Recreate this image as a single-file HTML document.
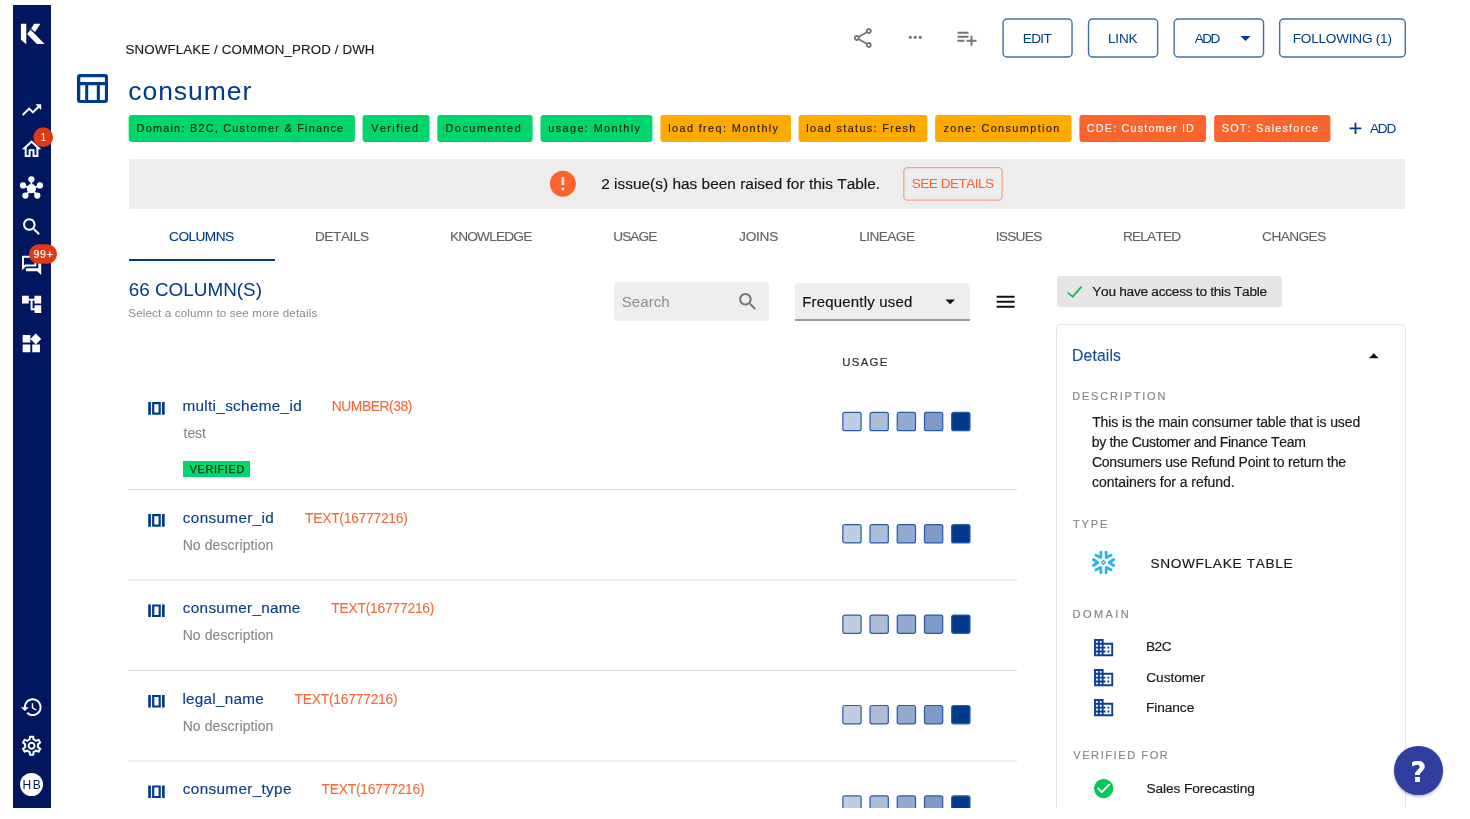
<!DOCTYPE html>
<html lang="en">
<head>
<meta charset="utf-8">
<title>consumer - SNOWFLAKE / COMMON_PROD / DWH</title>
<style>
html,body{margin:0;padding:0;background:#fff;}
body{width:1470px;height:819px;overflow:hidden;position:relative;font-family:"Liberation Sans",Arial,sans-serif;font-kerning:none;-webkit-font-smoothing:antialiased;}
#app{position:absolute;left:0;top:0;width:1470px;height:808px;overflow:hidden;will-change:transform;}
.t{position:absolute;white-space:nowrap;line-height:1;display:block;}
svg{position:absolute;display:block;overflow:visible;}
#sidebar{position:absolute;left:13px;top:5px;width:38px;height:803px;background:#001760;}
.badge{position:absolute;background:#DD3A12;border-radius:10px;}
.avatar{position:absolute;left:19.9px;top:773px;width:23.4px;height:23.4px;border-radius:50%;background:#fff;}
.btn{position:absolute;top:18.3px;height:36.1px;border:1.6px solid rgba(0,58,140,.72);border-radius:5px;box-sizing:content-box;}
.tag{position:absolute;top:115px;height:27px;border-radius:3px;}
#banner{position:absolute;left:129px;top:159px;width:1276px;height:49.5px;background:#EDEDED;}
.seebtn{position:absolute;left:903.1px;top:166.9px;width:96.8px;height:30.6px;border:1.4px solid rgba(250,100,45,.6);border-radius:5px;}
.ink{position:absolute;left:128.7px;top:258.7px;width:146.7px;height:2.1px;background:#003A8C;}
.search{position:absolute;left:614px;top:282px;width:155px;height:38.6px;background:#EEEEEE;border-radius:4px;}
.select{position:absolute;left:795px;top:283px;width:175px;height:36px;background:#EEEEEE;border-radius:4px 4px 0 0;}
.select:after{content:"";position:absolute;left:0;top:36px;width:175px;height:2px;background:#9B9B9B;}
.sep{position:absolute;left:129px;width:888px;height:1px;background:#E2E2E2;}
.sqs{position:absolute;left:0;height:20px;}
.sq{position:absolute;top:0;width:17.6px;height:17.6px;border:1px solid #2A5BA6;border-radius:3px;display:block;}
.colico{position:absolute;}
.chip{position:absolute;left:1057px;top:276px;width:225px;height:31px;background:#E5E5E5;border-radius:3px;}
.card{position:absolute;left:1056.4px;top:324.2px;width:347.2px;height:520px;border:1px solid #E3E3E3;border-radius:5px;}
#help{position:absolute;left:1394.1px;top:746.1px;width:48.6px;height:48.6px;border-radius:50%;background:#303F9F;box-shadow:0 1.5px 2.5px rgba(0,0,0,.3);}
</style>
</head>
<body>
<div id="app">

<nav id="sidebar" aria-label="Main navigation"></nav>
<div id="navicons">
  <!-- logo -->
  <svg style="left:0px;top:0px" width="60" height="60" viewBox="0 0 60 60"><g fill="#fff"><path d="M20.9 23.7h5.4v20.5l-5.4-4.5z"/><path d="M34.2 23.7h6.3L35 32.1l-3.9-3.6z"/><path d="M30.4 29.6l14.2 14.3h-7.8L27.2 33.9z"/></g></svg>
  <!-- trending_up -->
  <svg style="left:20px;top:98px" width="23" height="23" viewBox="-0.1043 -0.4174 24 24"><path fill="#fff" d="M16 6l2.29 2.29-4.88 4.88-4-4L2 16.59 3.41 18l6-6 4 4 6.3-6.29L22 12V6z"/></svg>
  <!-- home -->
  <svg style="left:19px;top:137px" width="23.5" height="23.5" viewBox="-0.817 -0.4085 24 24"><path fill="#fff" d="M12 5.69l5 4.5V18h-2v-6H9v6H7v-7.81l5-4.5M12 3L2 12h3v8h6v-6h2v6h6v-8h3L12 3z"/></svg>
  <!-- hub -->
  <svg style="left:0px;top:0px" width="60" height="210" viewBox="0 0 60 210"><g fill="#fff"><g stroke="#fff" stroke-width="1.7"><path d="M31.4 188.7V179.3M31.4 188.7L23 185.4M31.4 188.7l8.500-3.300M31.400 188.700l-6 6.900M31.400 188.700l5.900 6.900"/></g><circle cx="31.4" cy="188.700" r="4.600"/><circle cx="31.4" cy="179.300" r="3.100"/><circle cx="23" cy="185.400" r="3.100"/><circle cx="39.900" cy="185.400" r="3.100"/><circle cx="25.400" cy="195.600" r="3.100"/><circle cx="37.300" cy="195.600" r="3.100"/></g></svg>
  <!-- search -->
  <svg style="left:20px;top:215px" width="23" height="23" viewBox="-0.2087 -0.4174 24 24"><path fill="#fff" d="M15.5 14h-.79l-.28-.27C15.41 12.59 16 11.11 16 9.5 16 5.91 13.09 3 9.5 3S3 5.91 3 9.5 5.91 16 9.5 16c1.61 0 3.09-.59 4.23-1.57l.27.28v.79l5 4.99L20.49 19l-4.99-5zm-6 0C7.01 14 5 11.99 5 9.5S7.01 5 9.5 5 14 7.01 14 9.5 11.99 14 9.5 14z"/></svg>
  <!-- forum -->
  <svg style="left:20px;top:253px" width="23" height="23" viewBox="-0.1043 -0.9913 24 24"><path fill="#fff" d="M15 4v7H5.17L4 12.17V4h11m1-2H3c-.55 0-1 .45-1 1v14l4-4h10c.55 0 1-.45 1-1V3c0-.55-.45-1-1-1zm5 4h-2v9H6v2c0 .55.45 1 1 1h11l4 4V7c0-.55-.45-1-1-1z"/></svg>
  <!-- account_tree -->
  <svg style="left:20px;top:292px" width="23" height="23" viewBox="-0.1043 -0.9391 24 24"><path fill="#fff" d="M22 11V3h-7v3H9V3H2v8h7V8h2v10h4v3h7v-8h-7v3h-2V8h2v3z"/></svg>
  <!-- widgets -->
  <svg style="left:19px;top:332px" width="23" height="23" viewBox="-0.8348 0 24 24"><path fill="#fff" d="M13 13v8h8v-8h-8zM3 21h8v-8H3v8zM3 3v8h8V3H3zm13.66-1.31L11 7.34 16.66 13l5.66-5.66-5.66-5.65z"/></svg>
  <!-- history -->
  <svg style="left:20px;top:695px" width="23.5" height="23.5" viewBox="0 -0.4085 24 24"><path fill="#fff" d="M13 3c-4.97 0-9 4.03-9 9H1l3.89 3.89.07.14L9 12H6c0-3.87 3.13-7 7-7s7 3.13 7 7-3.13 7-7 7c-1.93 0-3.68-.79-4.94-2.06l-1.42 1.42C8.27 19.99 10.51 21 13 21c4.97 0 9-4.03 9-9s-4.03-9-9-9zm-1 5v5l4.28 2.54.72-1.21-3.5-2.08V8H12z"/></svg>
  <!-- settings -->
  <svg style="left:19px;top:733px" width="24" height="24" viewBox="-0.6 -0.7 24 24"><path fill="#fff" d="M19.43 12.98c.04-.32.07-.64.07-.98 0-.34-.03-.66-.07-.98l2.11-1.65c.19-.15.24-.42.12-.64l-2-3.46c-.09-.16-.26-.25-.44-.25-.06 0-.12.01-.17.03l-2.49 1c-.52-.4-1.08-.73-1.69-.98l-.38-2.65C14.460 2.180 14.250 2 14 2h-4c-.25 0-.46.18-.49.42l-.38 2.650c-.61.25-1.17.59-1.69.98l-2.490-1c-.06-.02-.12-.03-.18-.03-.17 0-.34.09-.43.25l-2 3.460c-.13.22-.07.49.12.64l2.110 1.650c-.04.32-.07.65-.07.98 0 .33.03.66.07.98l-2.110 1.650c-.19.15-.24.42-.12.64l2 3.460c.09.16.26.25.44.25.06 0 .12-.01.17-.03l2.490-1c.52.4 1.080.73 1.690.98l.38 2.650c.03.24.24.42.49.42h4c.25 0 .46-.18.49-.42l.38-2.650c.61-.25 1.170-.59 1.690-.98l2.490 1c.06.02.12.03.18.03.17 0 .34-.09.43-.25l2-3.460c.12-.22.07-.49-.12-.64l-2.110-1.650zm-1.980-1.710c.04.31.05.52.05.73 0 .21-.02.43-.05.73l-.14 1.130.89.7 1.080.84-.7 1.210-1.270-.51-1.040-.42-.9.68c-.43.32-.84.56-1.250.73l-1.060.43-.16 1.130-.2 1.350h-1.400l-.19-1.350-.16-1.130-1.060-.43c-.43-.18-.83-.41-1.230-.71l-.91-.7-1.060.43-1.270.51-.7-1.210 1.080-.84.89-.7-.14-1.130c-.03-.31-.05-.54-.05-.74s.02-.43.05-.73l.14-1.130-.89-.7-1.080-.84.7-1.210 1.270.51 1.040.42.9-.68c.43-.32.84-.56 1.250-.73l1.060-.43.16-1.130.2-1.350h1.390l.19 1.350.16 1.130 1.060.43c.43.18.83.41 1.230.71l.91.7 1.060-.43 1.270-.51.7 1.210-1.070.85-.89.7.14 1.130zM12 8c-2.210 0-4 1.790-4 4s1.790 4 4 4 4-1.790 4-4-1.790-4-4-4zm0 6c-1.100 0-2-.9-2-2s.9-2 2-2 2 .9 2 2-.9 2-2 2z"/></svg>
  <div class="avatar"></div>
  <svg style="left:0px;top:100px" width="60" height="180" viewBox="0 100 60 180"><circle cx="43.2" cy="137.150" r="9.900" fill="#DD3A12"/><rect x="29" y="244.250" width="28" height="19.600" rx="9.800" fill="#DD3A12"/></svg>
<span class="t" id="t62" style="left:40.50px;top:131.91px;font-size:10.5px;letter-spacing:0.000px;color:#FFFFFF;">1</span>
<span class="t" id="t63" style="left:33.51px;top:248.91px;font-size:10.5px;letter-spacing:0.749px;color:#FFFFFF;-webkit-text-stroke:0.15px #FFFFFF;">99+</span>
<span class="t" id="t64" style="left:22.42px;top:778.81px;font-size:12px;letter-spacing:1.647px;color:#001760;">HB</span>
</div>

<header id="pagehead">
  <!-- table icon -->
  <svg style="left:77px;top:73px" width="31" height="29.2" viewBox="0 -0.9 31 29.2"><path fill="#003A8C" fill-rule="evenodd" d="M3 0h25a3 3 0 0 1 3 3v23.200a3 3 0 0 1-3 3h-25a3 3 0 0 1-3-3V3A3 3 0 0 1 3 0zM3.300 3.300v4.900h24.600V3.300zM3.300 11.300v14.800h4.900V11.300zM11.200 11.300v14.800h8.600V11.300zM22.900 11.300v14.800h5V11.300z"/></svg>
  <!-- share -->
  <svg style="left:850px;top:26px" width="24" height="24" viewBox="-0.8 0 24 24"><path fill="#757575" d="M18 16.08c-.76 0-1.440.3-1.960.77L8.910 12.700c.05-.23.09-.46.09-.7s-.04-.47-.09-.7l7.050-4.110c.54.5 1.250.81 2.040.81 1.660 0 3-1.340 3-3s-1.340-3-3-3-3 1.340-3 3c0 .24.04.47.09.7L8.040 9.810C7.500 9.310 6.790 9 6 9c-1.660 0-3 1.340-3 3s1.340 3 3 3c.79 0 1.500-.31 2.040-.81l7.120 4.160c-.05.21-.08.43-.08.65 0 1.610 1.310 2.920 2.920 2.920s2.920-1.310 2.920-2.920c0-1.610-1.310-2.920-2.920-2.920zM18 4c.55 0 1 .45 1 1s-.45 1-1 1-1-.45-1-1 .45-1 1-1zM6 13c-.55 0-1-.45-1-1s.45-1 1-1 1 .45 1 1-.45 1-1 1zm12 7.020c-.55 0-1-.45-1-1s.45-1 1-1 1 .45 1 1-.45 1-1 1z"/></svg>
  <!-- more -->
  <svg style="left:905px;top:27px" width="20" height="20" viewBox="-0.24 -0.36 24 24"><path fill="#757575" d="M6 10c-1.100 0-2 .9-2 2s.9 2 2 2 2-.9 2-2-.9-2-2-2zm12 0c-1.100 0-2 .9-2 2s.9 2 2 2 2-.9 2-2-.9-2-2-2zm-6 0c-1.100 0-2 .9-2 2s.9 2 2 2 2-.9 2-2-.9-2-2-2z"/></svg>
  <!-- playlist_add -->
  <svg style="left:954px;top:25px" width="24" height="24" viewBox="-0.5 -0.8 24 24"><path fill="#757575" d="M14 10H3v2h11v-2zm0-4H3v2h11V6zm4 8v-4h-2v4h-4v2h4v4h2v-4h4v-2h-4zM3 16h7v-2H3v2z"/></svg>
  <svg class="btns" style="left:0px;top:0px" width="1470" height="70" viewBox="0 0 1470 70"><g fill="none" stroke="rgba(0,58,140,.74)" stroke-width="1.4"><rect x="1003.05" y="19.03" width="69" height="37.900" rx="4"/><rect x="1088.550" y="19.03" width="69.100" height="37.900" rx="4"/><rect x="1174.150" y="19.03" width="89.400" height="37.900" rx="4"/><rect x="1279.650" y="19.03" width="125.600" height="37.900" rx="4"/></g></svg>
  <svg style="left:1240px;top:36px" width="10" height="5" viewBox="-0.5 0 10 5"><path fill="#003A8C" d="M0 0h10L5 5z"/></svg>
<span class="t" id="t0" style="left:125.60px;top:42.67px;font-size:13.3px;letter-spacing:0.127px;color:#1A1A1A;-webkit-text-stroke:0.15px #1A1A1A;">SNOWFLAKE / COMMON_PROD / DWH</span>
<span class="t" id="t1" style="left:128.27px;top:77.90px;font-size:26.5px;letter-spacing:0.945px;color:#003A8C;">consumer</span>
<span class="t" id="t2" style="left:1022.78px;top:31.91px;font-size:13.6px;letter-spacing:-0.650px;color:#003A8C;">EDIT</span>
<span class="t" id="t3" style="left:1107.88px;top:31.91px;font-size:13.6px;letter-spacing:-0.155px;color:#003A8C;">LINK</span>
<span class="t" id="t4" style="left:1194.67px;top:31.91px;font-size:13.6px;letter-spacing:-1.468px;color:#003A8C;">ADD</span>
<span class="t" id="t5" style="left:1292.78px;top:31.91px;font-size:13.6px;letter-spacing:-0.229px;color:#003A8C;">FOLLOWING (1)</span>
</header>

<section id="tags">
<svg style="left:0px;top:100px" width="1470" height="50" viewBox="0 100 1470 50"><rect x="128.7" y="114.9" width="226.2" height="27.1" rx="3" fill="#00D66C"/><rect x="362.6" y="114.9" width="67" height="27.1" rx="3" fill="#00D66C"/><rect x="437.3" y="114.9" width="95.3" height="27.1" rx="3" fill="#00D66C"/><rect x="540.5" y="114.9" width="111.9" height="27.1" rx="3" fill="#00D66C"/><rect x="660.4" y="114.9" width="130.6" height="27.1" rx="3" fill="#FFAA00"/><rect x="798.6" y="114.9" width="128.8" height="27.1" rx="3" fill="#FFAA00"/><rect x="935.1" y="114.9" width="136.5" height="27.1" rx="3" fill="#FFAA00"/><rect x="1079.4" y="114.9" width="126.7" height="27.1" rx="3" fill="#FA642D"/><rect x="1214.1" y="114.9" width="116.3" height="27.1" rx="3" fill="#FA642D"/></svg>
  <svg style="left:1349px;top:122px" width="11.8" height="11.4" viewBox="-0.6 -0.7 11.8 11.4"><path stroke="#003A8C" stroke-width="1.8" fill="none" d="M5.900 0v11.400M0 5.700h11.800"/></svg>
<span class="t" id="t6" style="left:136.61px;top:123.20px;font-size:10.8px;letter-spacing:1.263px;color:#04200F;-webkit-text-stroke:0.14px #04200F;">Domain: B2C, Customer &amp; Finance</span>
<span class="t" id="t7" style="left:371.25px;top:123.20px;font-size:10.8px;letter-spacing:1.432px;color:#04200F;-webkit-text-stroke:0.14px #04200F;">Verified</span>
<span class="t" id="t8" style="left:445.51px;top:123.20px;font-size:10.8px;letter-spacing:1.550px;color:#04200F;-webkit-text-stroke:0.14px #04200F;">Documented</span>
<span class="t" id="t9" style="left:548.30px;top:123.20px;font-size:10.8px;letter-spacing:1.422px;color:#04200F;-webkit-text-stroke:0.14px #04200F;">usage: Monthly</span>
<span class="t" id="t10" style="left:668.27px;top:123.20px;font-size:10.8px;letter-spacing:1.406px;color:#221600;-webkit-text-stroke:0.14px #221600;">load freq: Monthly</span>
<span class="t" id="t11" style="left:806.37px;top:123.20px;font-size:10.8px;letter-spacing:1.364px;color:#221600;-webkit-text-stroke:0.14px #221600;">load status: Fresh</span>
<span class="t" id="t12" style="left:943.46px;top:123.20px;font-size:10.8px;letter-spacing:1.430px;color:#221600;-webkit-text-stroke:0.14px #221600;">zone: Consumption</span>
<span class="t" id="t13" style="left:1086.85px;top:123.20px;font-size:10.8px;letter-spacing:1.177px;color:#FFFFFF;-webkit-text-stroke:0.14px #FFFFFF;">CDE: Customer ID</span>
<span class="t" id="t14" style="left:1221.81px;top:123.20px;font-size:10.8px;letter-spacing:1.210px;color:#FFFFFF;-webkit-text-stroke:0.14px #FFFFFF;">SOT: Salesforce</span>
<span class="t" id="t15" style="left:1369.97px;top:122.00px;font-size:13.6px;letter-spacing:-1.218px;color:#003A8C;">ADD</span>
</section>

<section id="banner"></section>
<section id="bannercontent">
  <svg style="left:547px;top:168px" width="31.2" height="31.2" viewBox="-0.2308 -0.1538 24 24"><path fill="#FA642D" d="M12 2C6.480 2 2 6.480 2 12s4.480 10 10 10 10-4.480 10-10S17.520 2 12 2zm1 15h-2v-2h2v2zm0-4h-2V7h2v6z"/></svg>
  <svg style="left:0px;top:150px" width="1470" height="70" viewBox="0 150 1470 70"><rect x="903.8" y="167.600" width="98.400" height="32.600" rx="4" fill="none" stroke="rgba(250,100,45,.55)" stroke-width="1.2"/></svg>
<span class="t" id="t16" style="left:601.13px;top:176.31px;font-size:15.4px;letter-spacing:0.024px;color:#161616;-webkit-text-stroke:0.18px #161616;">2 issue(s) has been raised for this Table.</span>
<span class="t" id="t17" style="left:911.78px;top:176.81px;font-size:13.6px;letter-spacing:-0.523px;color:#FA642D;">SEE DETAILS</span>
</section>

<section id="tabs">
  <div class="ink"></div>
<span class="t" id="t18" style="left:169.10px;top:230.01px;font-size:13.7px;letter-spacing:-0.564px;color:#003A8C;-webkit-text-stroke:0.1px #003A8C;">COLUMNS</span>
<span class="t" id="t19" style="left:314.88px;top:230.01px;font-size:13.7px;letter-spacing:-0.458px;color:#616161;-webkit-text-stroke:0.12px #616161;">DETAILS</span>
<span class="t" id="t20" style="left:449.88px;top:230.01px;font-size:13.7px;letter-spacing:-0.819px;color:#616161;-webkit-text-stroke:0.12px #616161;">KNOWLEDGE</span>
<span class="t" id="t21" style="left:613.24px;top:230.01px;font-size:13.7px;letter-spacing:-0.954px;color:#616161;-webkit-text-stroke:0.12px #616161;">USAGE</span>
<span class="t" id="t22" style="left:739.09px;top:230.01px;font-size:13.7px;letter-spacing:-0.275px;color:#616161;-webkit-text-stroke:0.12px #616161;">JOINS</span>
<span class="t" id="t23" style="left:859.28px;top:230.01px;font-size:13.7px;letter-spacing:-0.596px;color:#616161;-webkit-text-stroke:0.12px #616161;">LINEAGE</span>
<span class="t" id="t24" style="left:995.64px;top:230.01px;font-size:13.7px;letter-spacing:-0.712px;color:#616161;-webkit-text-stroke:0.12px #616161;">ISSUES</span>
<span class="t" id="t25" style="left:1122.98px;top:230.01px;font-size:13.7px;letter-spacing:-0.835px;color:#616161;-webkit-text-stroke:0.12px #616161;">RELATED</span>
<span class="t" id="t26" style="left:1262.10px;top:230.01px;font-size:13.7px;letter-spacing:-0.588px;color:#616161;-webkit-text-stroke:0.12px #616161;">CHANGES</span>
</section>

<main id="columns">
  <div class="search"></div>
  <svg style="left:736px;top:290px" width="23" height="23" viewBox="-0.313 -0.2087 24 24"><path fill="#757575" d="M15.500 14h-.79l-.28-.27C15.410 12.590 16 11.110 16 9.500 16 5.910 13.090 3 9.500 3S3 5.910 3 9.500 5.910 16 9.500 16c1.610 0 3.090-.59 4.230-1.570l.27.28v.79l5 4.990L20.490 19l-4.990-5zm-6 0C7.010 14 5 11.990 5 9.500S7.010 5 9.500 5 14 7.010 14 9.500 11.990 14 9.500 14z"/></svg>
  <div class="select"></div>
  <svg style="left:945px;top:299px" width="9.6" height="4.8" viewBox="-0.4167 -0.5208 10 5"><path fill="#111" d="M0 0h10L5 5z"/></svg>
  <svg style="left:993px;top:289px" width="24" height="24" viewBox="-0.6 -0.8 24 24"><path fill="#111" d="M3 18h18v-2H3v2zm0-5h18v-2H3v2zm0-7v2h18V6H3z"/></svg>
<span class="t" id="t27" style="left:128.64px;top:281.30px;font-size:18.9px;letter-spacing:0.006px;color:#003A8C;">66 COLUMN(S)</span>
<span class="t" id="t28" style="left:128.27px;top:307.01px;font-size:11.6px;letter-spacing:0.155px;color:#8A8A8A;">Select a column to see more details</span>
<span class="t" id="t29" style="left:621.71px;top:294.10px;font-size:15.1px;letter-spacing:0.045px;color:#8E8E8E;">Search</span>
<span class="t" id="t30" style="left:802.27px;top:293.91px;font-size:15px;letter-spacing:0.174px;color:#111111;-webkit-text-stroke:0.15px #111111;">Frequently used</span>
<span class="t" id="t31" style="left:842.32px;top:357.10px;font-size:11.4px;letter-spacing:1.265px;color:#2C2C2C;-webkit-text-stroke:0.2px #2C2C2C;">USAGE</span>
<svg class="colico" style="left:148px;top:402px" width="16.5" height="12.6" viewBox="-0.2 -0.05 16.5 12.6"><path fill="#003A8C" d="M0 0h2.7v12.6H0zM13.8 0h2.7v12.6h-2.700zM3.900 0h8.700v12.600H3.900zM6.100 2.100v8.400h4.300V2.100z" fill-rule="evenodd"/></svg>
<svg class="sqs" style="left:842px;top:411px" width="130" height="20" viewBox="-0.2 -0.8 130 20"><g stroke="#2A5BA6" stroke-width="1.2"><rect x="0.60" y="0.6" width="18.3" height="18.3" rx="2" fill="#BFCDE3"/><rect x="27.82" y="0.6" width="18.3" height="18.3" rx="2" fill="#ABBDD9"/><rect x="55.04" y="0.6" width="18.3" height="18.3" rx="2" fill="#93AAD0"/><rect x="82.26" y="0.6" width="18.3" height="18.3" rx="2" fill="#7F9AC6"/><rect x="109.48" y="0.6" width="18.3" height="18.3" rx="2" fill="#003A8C"/></g></svg>
<svg class="colico" style="left:148px;top:514px" width="16.5" height="12.6" viewBox="-0.2 -0.05 16.5 12.6"><path fill="#003A8C" d="M0 0h2.7v12.6H0zM13.8 0h2.7v12.6h-2.700zM3.900 0h8.700v12.600H3.900zM6.100 2.100v8.400h4.300V2.100z" fill-rule="evenodd"/></svg>
<svg class="sqs" style="left:842px;top:524px" width="130" height="20" viewBox="-0.2 0 130 20"><g stroke="#2A5BA6" stroke-width="1.2"><rect x="0.60" y="0.6" width="18.3" height="18.3" rx="2" fill="#BFCDE3"/><rect x="27.82" y="0.6" width="18.3" height="18.3" rx="2" fill="#ABBDD9"/><rect x="55.04" y="0.6" width="18.3" height="18.3" rx="2" fill="#93AAD0"/><rect x="82.26" y="0.6" width="18.3" height="18.3" rx="2" fill="#7F9AC6"/><rect x="109.48" y="0.6" width="18.3" height="18.3" rx="2" fill="#003A8C"/></g></svg>
<svg class="colico" style="left:148px;top:604px" width="16.5" height="12.6" viewBox="-0.2 -0.5 16.5 12.6"><path fill="#003A8C" d="M0 0h2.7v12.6H0zM13.8 0h2.7v12.6h-2.700zM3.900 0h8.700v12.600H3.900zM6.100 2.100v8.400h4.300V2.100z" fill-rule="evenodd"/></svg>
<svg class="sqs" style="left:842px;top:614px" width="130" height="20" viewBox="-0.2 -0.45 130 20"><g stroke="#2A5BA6" stroke-width="1.2"><rect x="0.60" y="0.6" width="18.3" height="18.3" rx="2" fill="#BFCDE3"/><rect x="27.82" y="0.6" width="18.3" height="18.3" rx="2" fill="#ABBDD9"/><rect x="55.04" y="0.6" width="18.3" height="18.3" rx="2" fill="#93AAD0"/><rect x="82.26" y="0.6" width="18.3" height="18.3" rx="2" fill="#7F9AC6"/><rect x="109.48" y="0.6" width="18.3" height="18.3" rx="2" fill="#003A8C"/></g></svg>
<svg class="colico" style="left:148px;top:694px" width="16.5" height="12.6" viewBox="-0.2 -0.95 16.5 12.6"><path fill="#003A8C" d="M0 0h2.7v12.6H0zM13.8 0h2.7v12.6h-2.700zM3.900 0h8.700v12.600H3.900zM6.100 2.100v8.400h4.300V2.100z" fill-rule="evenodd"/></svg>
<svg class="sqs" style="left:842px;top:704px" width="130" height="20" viewBox="-0.2 -0.9 130 20"><g stroke="#2A5BA6" stroke-width="1.2"><rect x="0.60" y="0.6" width="18.3" height="18.3" rx="2" fill="#BFCDE3"/><rect x="27.82" y="0.6" width="18.3" height="18.3" rx="2" fill="#ABBDD9"/><rect x="55.04" y="0.6" width="18.3" height="18.3" rx="2" fill="#93AAD0"/><rect x="82.26" y="0.6" width="18.3" height="18.3" rx="2" fill="#7F9AC6"/><rect x="109.48" y="0.6" width="18.3" height="18.3" rx="2" fill="#003A8C"/></g></svg>
<svg class="colico" style="left:148px;top:785px" width="16.5" height="12.6" viewBox="-0.2 -0.4 16.5 12.6"><path fill="#003A8C" d="M0 0h2.7v12.6H0zM13.8 0h2.7v12.6h-2.700zM3.900 0h8.700v12.600H3.900zM6.100 2.100v8.400h4.300V2.100z" fill-rule="evenodd"/></svg>
<svg class="sqs" style="left:842px;top:795px" width="130" height="20" viewBox="-0.2 -0.35 130 20"><g stroke="#2A5BA6" stroke-width="1.2"><rect x="0.60" y="0.6" width="18.3" height="18.3" rx="2" fill="#BFCDE3"/><rect x="27.82" y="0.6" width="18.3" height="18.3" rx="2" fill="#ABBDD9"/><rect x="55.04" y="0.6" width="18.3" height="18.3" rx="2" fill="#93AAD0"/><rect x="82.26" y="0.6" width="18.3" height="18.3" rx="2" fill="#7F9AC6"/><rect x="109.48" y="0.6" width="18.3" height="18.3" rx="2" fill="#003A8C"/></g></svg><svg style="left:0px;top:480px" width="1030" height="300" viewBox="0 480 1030 300"><g stroke="#DDDDDD" stroke-width="1"><path d="M128.7 489.5H1017"/><path d="M128.7 580H1017"/><path d="M128.7 670.5H1017"/><path d="M128.7 761H1017"/></g></svg>
  <div style="position:absolute;left:183px;top:461px;width:67.4px;height:15.8px;background:#00D66C"></div>
<span class="t" id="t32" style="left:182.48px;top:397.67px;font-size:15.3px;letter-spacing:0.314px;color:#0A3C8E;-webkit-text-stroke:0.15px #0A3C8E;">multi_scheme_id</span>
<span class="t" id="t33" style="left:331.77px;top:400.00px;font-size:13.8px;letter-spacing:-0.428px;color:#F8673A;-webkit-text-stroke:0.1px #F8673A;">NUMBER(38)</span>
<span class="t" id="t34" style="left:183.59px;top:426.31px;font-size:14px;letter-spacing:-0.084px;color:#858585;-webkit-text-stroke:0.1px #858585;">test</span>
<span class="t" id="t35" style="left:182.85px;top:509.67px;font-size:15.3px;letter-spacing:0.334px;color:#0A3C8E;-webkit-text-stroke:0.15px #0A3C8E;">consumer_id</span>
<span class="t" id="t36" style="left:304.99px;top:512.00px;font-size:13.8px;letter-spacing:-0.230px;color:#F8673A;-webkit-text-stroke:0.1px #F8673A;">TEXT(16777216)</span>
<span class="t" id="t37" style="left:182.65px;top:537.76px;font-size:14px;letter-spacing:0.098px;color:#858585;-webkit-text-stroke:0.1px #858585;">No description</span>
<span class="t" id="t38" style="left:182.85px;top:600.10px;font-size:15.3px;letter-spacing:0.298px;color:#0A3C8E;-webkit-text-stroke:0.15px #0A3C8E;">consumer_name</span>
<span class="t" id="t39" style="left:331.29px;top:602.45px;font-size:13.8px;letter-spacing:-0.207px;color:#F8673A;-webkit-text-stroke:0.1px #F8673A;">TEXT(16777216)</span>
<span class="t" id="t40" style="left:182.65px;top:628.20px;font-size:14px;letter-spacing:0.098px;color:#858585;-webkit-text-stroke:0.1px #858585;">No description</span>
<span class="t" id="t41" style="left:182.47px;top:690.56px;font-size:15.3px;letter-spacing:0.245px;color:#0A3C8E;-webkit-text-stroke:0.15px #0A3C8E;">legal_name</span>
<span class="t" id="t42" style="left:294.49px;top:692.91px;font-size:13.8px;letter-spacing:-0.207px;color:#F8673A;-webkit-text-stroke:0.1px #F8673A;">TEXT(16777216)</span>
<span class="t" id="t43" style="left:182.65px;top:718.65px;font-size:14px;letter-spacing:0.098px;color:#858585;-webkit-text-stroke:0.1px #858585;">No description</span>
<span class="t" id="t44" style="left:182.85px;top:781.00px;font-size:15.3px;letter-spacing:0.335px;color:#0A3C8E;-webkit-text-stroke:0.15px #0A3C8E;">consumer_type</span>
<span class="t" id="t45" style="left:321.49px;top:783.36px;font-size:13.8px;letter-spacing:-0.207px;color:#F8673A;-webkit-text-stroke:0.1px #F8673A;">TEXT(16777216)</span>
<span class="t" id="t46" style="left:189.75px;top:463.70px;font-size:10.7px;letter-spacing:0.730px;color:#07301B;-webkit-text-stroke:0.25px #07301B;">VERIFIED</span>
</main>

<aside id="details">
  <div class="chip"></div>
  <svg style="left:1065px;top:280px" width="20" height="20" viewBox="0 0 20 20"><path fill="none" stroke="#00C853" stroke-width="1.8" d="M2.800 12.600L7.700 16.700L16.500 6.700"/></svg>
  <div class="card"></div>
  <svg style="left:1368px;top:353px" width="9.8" height="5" viewBox="-0.9184 -0.2041 10 5"><path fill="#111" d="M0 5h10L5 0z"/></svg>
  <!-- snowflake -->
  <svg style="left:1091px;top:550px" width="24" height="24" viewBox="-12.5 -12.5 24 24"><g fill="none" stroke="#29B5E8" stroke-width="2.850" stroke-linecap="round" stroke-linejoin="round"><path d="M-10.1 -2.950L-5.700 0L-10.1 2.950" transform="rotate(0)"/><path d="M-10.1 -2.950L-5.700 0L-10.1 2.950" transform="rotate(60)"/><path d="M-10.1 -2.950L-5.700 0L-10.1 2.950" transform="rotate(120)"/><path d="M-10.1 -2.950L-5.700 0L-10.1 2.950" transform="rotate(180)"/><path d="M-10.1 -2.950L-5.700 0L-10.1 2.950" transform="rotate(240)"/><path d="M-10.1 -2.950L-5.700 0L-10.1 2.950" transform="rotate(300)"/><path d="M0 -1.950L1.950 0 0 1.950 -1.950 0z" stroke-width="1.350"/></g></svg>
  <!-- domain icons -->
  <svg style="left:1092px;top:636px" width="23" height="23" viewBox="-0.1043 -0.1043 24 24"><path fill="#0D3F8F" d="M12 7V3H2v18h20V7H12zM6 19H4v-2h2v2zm0-4H4v-2h2v2zm0-4H4V9h2v2zm0-4H4V5h2v2zm4 12H8v-2h2v2zm0-4H8v-2h2v2zm0-4H8V9h2v2zm0-4H8V5h2v2zm10 12h-8v-2h2v-2h-2v-2h2v-2h-2V9h8v10zm-2-8h-2v2h2v-2zm0 4h-2v2h2v-2z"/></svg>
  <svg style="left:1092px;top:666px" width="23" height="23" viewBox="-0.1043 -0.1043 24 24"><path fill="#0D3F8F" d="M12 7V3H2v18h20V7H12zM6 19H4v-2h2v2zm0-4H4v-2h2v2zm0-4H4V9h2v2zm0-4H4V5h2v2zm4 12H8v-2h2v2zm0-4H8v-2h2v2zm0-4H8V9h2v2zm0-4H8V5h2v2zm10 12h-8v-2h2v-2h-2v-2h2v-2h-2V9h8v10zm-2-8h-2v2h2v-2zm0 4h-2v2h2v-2z"/></svg>
  <svg style="left:1092px;top:696px" width="23" height="23" viewBox="-0.1043 -0.1043 24 24"><path fill="#0D3F8F" d="M12 7V3H2v18h20V7H12zM6 19H4v-2h2v2zm0-4H4v-2h2v2zm0-4H4V9h2v2zm0-4H4V5h2v2zm4 12H8v-2h2v2zm0-4H8v-2h2v2zm0-4H8V9h2v2zm0-4H8V5h2v2zm10 12h-8v-2h2v-2h-2v-2h2v-2h-2V9h8v10zm-2-8h-2v2h2v-2zm0 4h-2v2h2v-2z"/></svg>
  <!-- check circle -->
  <svg style="left:1092px;top:777px" width="23" height="23" viewBox="-0.2087 -0.1043 24 24"><circle cx="12" cy="12" r="7" fill="#fff"/><path fill="#00C853" d="M12 2C6.480 2 2 6.480 2 12s4.480 10 10 10 10-4.480 10-10S17.520 2 12 2zm-2 15l-5-5 1.410-1.410L10 14.170l7.590-7.590L19 8l-9 9z"/></svg>
<span class="t" id="t47" style="left:1092.20px;top:285.46px;font-size:13.7px;letter-spacing:-0.274px;color:#181818;-webkit-text-stroke:0.18px #181818;">You have access to this Table</span>
<span class="t" id="t48" style="left:1072.01px;top:348.30px;font-size:15.7px;letter-spacing:0.161px;color:#164A9E;-webkit-text-stroke:0.12px #164A9E;">Details</span>
<span class="t" id="t49" style="left:1072.20px;top:390.51px;font-size:11px;letter-spacing:1.803px;color:#858585;-webkit-text-stroke:0.15px #858585;">DESCRIPTION</span>
<span class="t" id="t50" style="left:1092.19px;top:414.61px;font-size:14px;letter-spacing:-0.119px;color:#181818;-webkit-text-stroke:0.18px #181818;">This is the main consumer table that is used</span>
<span class="t" id="t51" style="left:1091.70px;top:434.90px;font-size:14px;letter-spacing:-0.290px;color:#181818;-webkit-text-stroke:0.18px #181818;">by the Customer and Finance Team</span>
<span class="t" id="t52" style="left:1091.89px;top:454.90px;font-size:14px;letter-spacing:-0.206px;color:#181818;-webkit-text-stroke:0.18px #181818;">Consumers use Refund Point to return the</span>
<span class="t" id="t53" style="left:1092.01px;top:474.90px;font-size:14px;letter-spacing:-0.061px;color:#181818;-webkit-text-stroke:0.18px #181818;">containers for a refund.</span>
<span class="t" id="t54" style="left:1073.05px;top:519.31px;font-size:11px;letter-spacing:1.830px;color:#858585;-webkit-text-stroke:0.15px #858585;">TYPE</span>
<span class="t" id="t55" style="left:1150.38px;top:556.75px;font-size:13.7px;letter-spacing:0.656px;color:#181818;-webkit-text-stroke:0.18px #181818;">SNOWFLAKE TABLE</span>
<span class="t" id="t56" style="left:1072.50px;top:608.90px;font-size:11px;letter-spacing:2.440px;color:#858585;-webkit-text-stroke:0.15px #858585;">DOMAIN</span>
<span class="t" id="t57" style="left:1145.98px;top:640.40px;font-size:13.7px;letter-spacing:-0.503px;color:#181818;-webkit-text-stroke:0.18px #181818;">B2C</span>
<span class="t" id="t58" style="left:1146.30px;top:670.71px;font-size:13.7px;letter-spacing:-0.066px;color:#181818;-webkit-text-stroke:0.18px #181818;">Customer</span>
<span class="t" id="t59" style="left:1145.98px;top:700.71px;font-size:13.7px;letter-spacing:-0.068px;color:#181818;-webkit-text-stroke:0.18px #181818;">Finance</span>
<span class="t" id="t60" style="left:1073.25px;top:750.01px;font-size:11px;letter-spacing:1.587px;color:#858585;-webkit-text-stroke:0.15px #858585;">VERIFIED FOR</span>
<span class="t" id="t61" style="left:1146.38px;top:782.10px;font-size:13.7px;letter-spacing:-0.066px;color:#181818;-webkit-text-stroke:0.18px #181818;">Sales Forecasting</span>
</aside>

<div id="help"></div>
<span class="t" id="t65" style="left:1410.20px;top:759.21px;font-size:28px;letter-spacing:0.000px;color:#FFFFFF;font-weight:700;font-family:'DejaVu Sans','Liberation Sans',sans-serif;">?</span>

</div>
</body>
</html>
